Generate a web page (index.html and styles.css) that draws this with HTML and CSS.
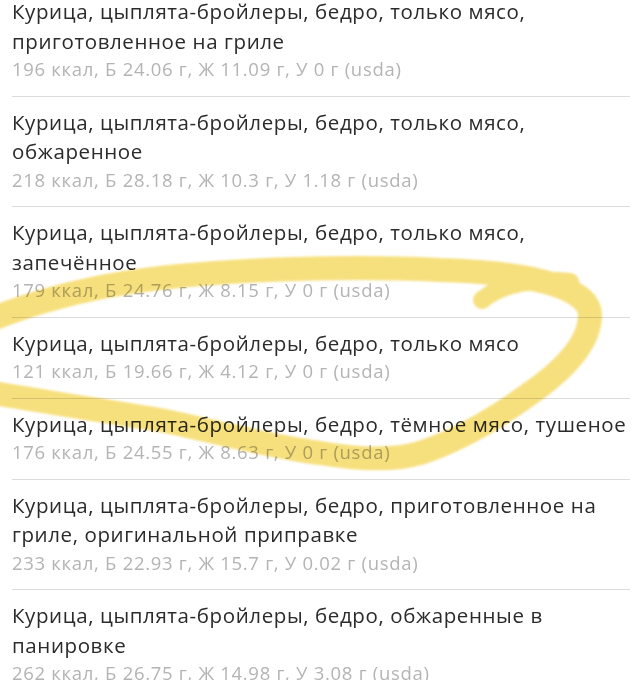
FILE: index.html
```html
<!DOCTYPE html>
<html lang="ru">
<head>
    <meta charset="UTF-8">
    <meta name="viewport" content="width=device-width, initial-scale=1.0">
    <title>Поиск продуктов</title>
    <link rel="stylesheet" href="styles.css">
</head>
<body>
    <div class="screen">
        <ul class="food-list">
            <li class="food-item">
                <div class="food-name">Курица, цыплята-бройлеры, бедро, только мясо, приготовленное на гриле</div>
                <div class="food-info">196 ккал, Б 24.06 г, Ж 11.09 г, У 0 г (usda)</div>
            </li>
            <li class="food-item">
                <div class="food-name">Курица, цыплята-бройлеры, бедро, только мясо, обжаренное</div>
                <div class="food-info">218 ккал, Б 28.18 г, Ж 10.3 г, У 1.18 г (usda)</div>
            </li>
            <li class="food-item">
                <div class="food-name">Курица, цыплята-бройлеры, бедро, только мясо, запечённое</div>
                <div class="food-info">179 ккал, Б 24.76 г, Ж 8.15 г, У 0 г (usda)</div>
            </li>
            <li class="food-item">
                <div class="food-name">Курица, цыплята-бройлеры, бедро, только мясо</div>
                <div class="food-info">121 ккал, Б 19.66 г, Ж 4.12 г, У 0 г (usda)</div>
            </li>
            <li class="food-item">
                <div class="food-name">Курица, цыплята-бройлеры, бедро, тёмное мясо, тушеное</div>
                <div class="food-info">176 ккал, Б 24.55 г, Ж 8.63 г, У 0 г (usda)</div>
            </li>
            <li class="food-item">
                <div class="food-name">Курица, цыплята-бройлеры, бедро, приготовленное на гриле, оригинальной приправке</div>
                <div class="food-info">233 ккал, Б 22.93 г, Ж 15.7 г, У 0.02 г (usda)</div>
            </li>
            <li class="food-item">
                <div class="food-name">Курица, цыплята-бройлеры, бедро, обжаренные в панировке</div>
                <div class="food-info">262 ккал, Б 26.75 г, Ж 14.98 г, У 3.08 г (usda)</div>
            </li>
        </ul>

        <!-- highlighter mark drawn over the list -->
        <svg class="marker" width="643" height="680" viewBox="0 0 643 680">
            <defs>
                <filter id="soft" x="-10%" y="-10%" width="120%" height="120%">
                    <feGaussianBlur stdDeviation="1.2"/>
                </filter>
            </defs>
            <g filter="url(#soft)" fill="none" stroke="#f5da66" stroke-linecap="round" stroke-linejoin="round">
                <path stroke-width="24" d="M -50 340 C 0 310, 80 287, 160 278 C 250 268, 360 266, 440 270 C 520 272, 590 285, 590 315 C 590 345, 560 373, 528 395 C 500 415, 460 440, 420 453 C 390 462, 350 458, 320 453 C 270 447, 210 430, 160 420 C 100 410, 0 395, -50 385"/>
                <path stroke-width="18" d="M 482 300 C 500 285, 530 278, 570 282"/>
            </g>
        </svg>
    </div>
</body>
</html>
```

FILE: styles.css
```css
body {
    margin: 0;
    background: #fff;
    font-family: "Open Sans", "Noto Sans", sans-serif;
}
.screen {
    position: relative;
    width: 643px;
    height: 680px;
    overflow: hidden;
}
.food-list {
    list-style: none;
    margin: -14px 0 0 0;
    padding: 0;
}
.food-item {
    margin: 0 13px 0 12px;
    padding: 11px 0 13.5px;
    border-bottom: 1px solid #dcdcdc;
}
.food-name {
    font-size: 20.5px;
    letter-spacing: 0.6px;
    line-height: 29.5px;
    color: #2b2b2b;
}
.food-info {
    font-size: 18.5px;
    letter-spacing: 0.7px;
    line-height: 26px;
    color: #b4b4b4;
}
.marker {
    position: absolute;
    top: 0;
    left: 0;
    pointer-events: none;
    mix-blend-mode: multiply;
    opacity: 0.85;
}
```
